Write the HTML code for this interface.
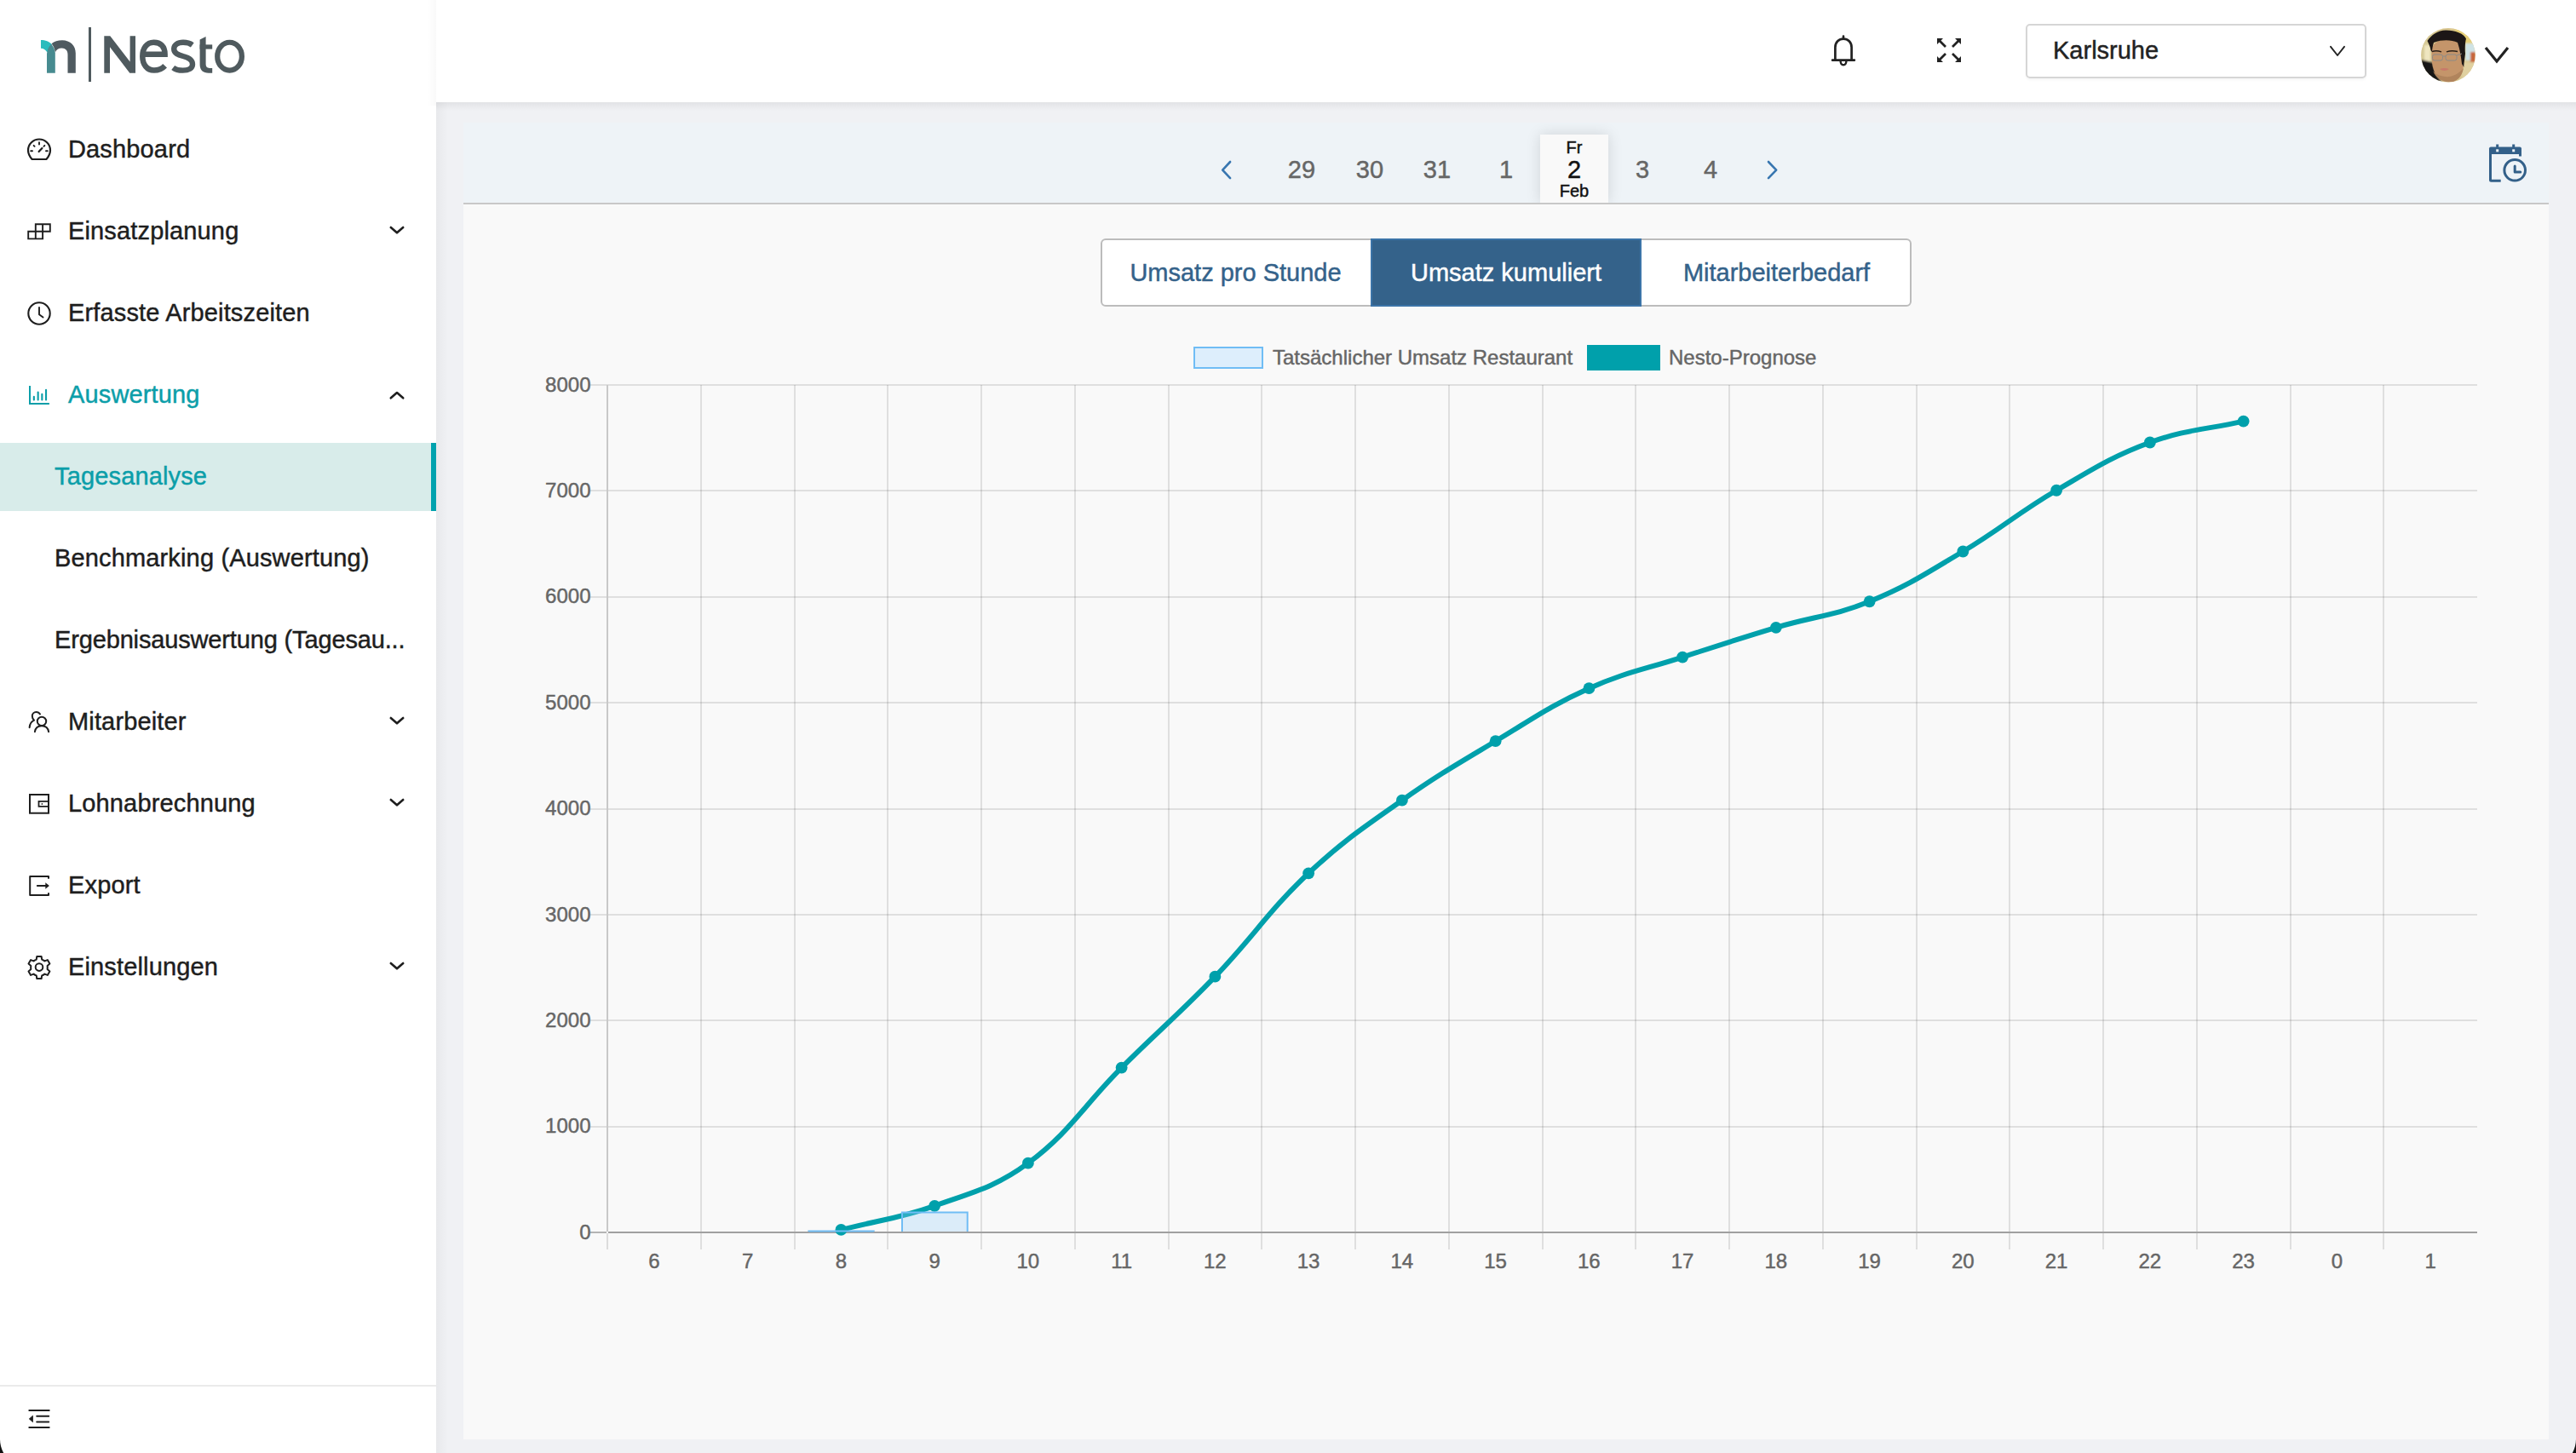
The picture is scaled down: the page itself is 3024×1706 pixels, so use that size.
<!DOCTYPE html>
<html><head><meta charset="utf-8"><title>Nesto Tagesanalyse</title>
<style>
html,body{margin:0;padding:0;}
body{width:3024px;height:1706px;position:relative;overflow:hidden;background:#f0f1f4;font-family:"Liberation Sans",sans-serif;}
.a{position:absolute;}
div{-webkit-text-stroke:0.45px currentColor;}
svg{position:absolute;overflow:visible;}
</style></head><body>

<div class="a" style="left:512px;top:120px;width:14px;height:1586px;background:linear-gradient(to right,rgba(0,0,0,0.035),rgba(0,0,0,0));"></div>
<div class="a" style="left:544px;top:144px;width:2448px;height:94px;background:#eef3f7;"></div>
<div class="a" style="left:544px;top:238px;width:2448px;height:2px;background:#c8c8c8;"></div>
<div class="a" style="left:544px;top:240px;width:2448px;height:1450px;background:#f9f9f9;"></div>
<div class="a" style="left:512px;top:120px;width:2512px;height:10px;background:linear-gradient(to bottom,rgba(0,0,0,0.06),rgba(0,0,0,0));"></div>
<div class="a" style="left:0;top:0;width:3024px;height:120px;background:#fff;"></div>
<div class="a" style="left:0;top:0;width:512px;height:1706px;background:#fff;"></div>
<svg style="left:40px;top:40px" width="60" height="60" viewBox="0 0 60 60">
<path d="M8,7 C13,7 18,8.5 21,12.5 L15.5,21.5 C13.5,18.5 11,16.7 8,16.7 Z" fill="#2bbcbd"/>
<path d="M15,45.7 L15,23 C15.5,18 17.5,14.5 20.2,11.8 C22.5,14.5 24.3,18 24.8,22 L24.8,45.7 Z" fill="#478b90"/>
<path d="M20.6,11.3 C23.5,8.6 28,7.2 33,7.2 C42.5,7.2 48.8,13.5 48.8,22.5 L48.8,45.7 L39.5,45.7 L39.5,24 C39.5,19.3 36.8,16.5 32.6,16.5 C28.8,16.5 26.2,18.5 24.9,21.3 C24.3,17.5 22.8,14 20.6,11.3 Z" fill="#4f5a60"/>
</svg>
<div class="a" style="left:104px;top:32px;width:3px;height:64px;background:#4f5a5e;"></div>
<svg style="left:0;top:0" width="300" height="120" viewBox="0 0 300 120">
<path d="M122.3,85.8 V42.2 H129.3 L152.6,72.5 V42.2 H159 V85.8 H152.3 L129,55.3 V85.8 Z" fill="#4f5a5e"/>
<path d="M167.3,63.7 H193.6 C193.6,54.5 188.5,49.8 180.5,49.8 C172,49.8 167.3,57 167.3,66.2 C167.3,75.5 172.5,82.6 180.8,82.6 C186,82.6 190.5,80.6 193.6,77.2" stroke="#4f5a5e" stroke-width="6.5" fill="none"/>
<path d="M225.8,52.8 C222.8,50.6 219.2,49.8 215,49.8 C208.5,49.8 204.2,52.8 204.2,57.5 C204.2,62.6 209,64.4 215,66 C221.6,67.6 226,70 226,75.5 C226,80 221.6,82.6 214.6,82.6 C210,82.6 206,81.6 203.2,79.4" stroke="#4f5a5e" stroke-width="6.4" fill="none"/>
<path d="M234.6,46.6 L241.6,43 V74.8 C241.6,78.6 243.2,79.9 246,79.9 H249.2 V85.8 H245 C238.2,85.8 234.6,82.4 234.6,75.6 Z" fill="#4f5a5e"/>
<rect x="234.6" y="52.4" width="14.6" height="5.2" fill="#4f5a5e"/>
<ellipse cx="269.55" cy="66.2" rx="14.35" ry="16.45" stroke="#4f5a5e" stroke-width="6.2" fill="none"/>
</svg>
<svg style="left:26px;top:156px" width="40" height="40" viewBox="0 0 40 40"><path d="M11.6,31 L28.4,31 C31.5,27.5 33,24 33,20.5 C33,13 27,7.5 20,7.5 C13,7.5 7,13 7,20.5 C7,24 8.5,27.5 11.6,31 Z" fill="none" stroke="#1e1e1e" stroke-width="2.2" stroke-linejoin="round"/>
 <path d="M20,11.3 L20,13.6 M13.6,14.8 L14.6,15.8 M26.4,14.8 L25.4,15.8 M10.2,21.3 L12,21.3 M29.8,21.3 L28,21.3" stroke="#1e1e1e" stroke-width="1.9" stroke-linecap="round"/>
 <path d="M19.6,22 L23.4,18" stroke="#1e1e1e" stroke-width="2.2" stroke-linecap="round"/></svg>
<div style="position:absolute;left:80px;top:161.45px;font-size:29px;line-height:29px;color:#1e1e1e;white-space:nowrap;letter-spacing:0.15px;">Dashboard</div>
<svg style="left:26px;top:252px" width="40" height="40" viewBox="0 0 40 40"><path d="M7.2,19.8 H24.1 M15.8,11.3 H32.8 M7.2,28.4 H24.1 M7.2,19.8 V28.4 M15.8,11.3 V28.4 M24.1,11.3 V28.4 M32.8,11.3 V19.8 M24.1,19.8 H32.8" fill="none" stroke="#1e1e1e" stroke-width="1.9" stroke-linecap="square"/></svg>
<div style="position:absolute;left:80px;top:257.45px;font-size:29px;line-height:29px;color:#1e1e1e;white-space:nowrap;letter-spacing:0.15px;">Einsatzplanung</div>
<svg style="left:450px;top:260.8px" width="32" height="20" viewBox="0 0 32 20"><path d="M8.8,6 L16,12.3 L23.2,6" fill="none" stroke="#1e1e1e" stroke-width="2.6" stroke-linecap="round" stroke-linejoin="round"/></svg>
<svg style="left:26px;top:348px" width="40" height="40" viewBox="0 0 40 40"><circle cx="20" cy="20" r="12.7" fill="none" stroke="#1e1e1e" stroke-width="2.1"/>
 <path d="M20,13 V21.3 L24.5,24.6" fill="none" stroke="#1e1e1e" stroke-width="1.9" stroke-linecap="round" stroke-linejoin="round"/></svg>
<div style="position:absolute;left:80px;top:353.45px;font-size:29px;line-height:29px;color:#1e1e1e;white-space:nowrap;letter-spacing:0.15px;">Erfasste Arbeitszeiten</div>
<svg style="left:26px;top:444px" width="40" height="40" viewBox="0 0 40 40"><path d="M9,8.9 V29.9 H31.9" fill="none" stroke="#0b9ea9" stroke-width="2"/>
 <path d="M13.85,21.7 V25.4 M18.65,16.5 V25.4 M23.35,18.8 V25.4 M28.05,13.7 V25.4" stroke="#0b9ea9" stroke-width="2.1" stroke-linecap="round"/></svg>
<div style="position:absolute;left:80px;top:449.45px;font-size:29px;line-height:29px;color:#0b9ea9;white-space:nowrap;letter-spacing:0.15px;">Auswertung</div>
<svg style="left:450px;top:455px" width="32" height="20" viewBox="0 0 32 20"><path d="M8.8,12.3 L16,6 L23.2,12.3" fill="none" stroke="#1e1e1e" stroke-width="2.6" stroke-linecap="round" stroke-linejoin="round"/></svg>
<svg style="left:26px;top:828px" width="40" height="40" viewBox="0 0 40 40"><path d="M21,10.5 C20,8.8 18.4,8 16.5,8 C13.8,8 11.8,10 11.8,12.8 C11.8,14.8 12.8,16.6 14.1,17.7 C11,19 9,22 8.6,26.2" fill="none" stroke="#1e1e1e" stroke-width="2" stroke-linecap="round" stroke-linejoin="round"/>
 <circle cx="23" cy="18.9" r="5.2" fill="none" stroke="#1e1e1e" stroke-width="2"/>
 <path d="M14.9,31.2 C15.5,27 18.5,24.2 23,24.2 C27.5,24.2 30.5,27 31.1,31.2" fill="none" stroke="#1e1e1e" stroke-width="2" stroke-linecap="round"/></svg>
<div style="position:absolute;left:80px;top:833.45px;font-size:29px;line-height:29px;color:#1e1e1e;white-space:nowrap;letter-spacing:0.15px;">Mitarbeiter</div>
<svg style="left:450px;top:836.8px" width="32" height="20" viewBox="0 0 32 20"><path d="M8.8,6 L16,12.3 L23.2,6" fill="none" stroke="#1e1e1e" stroke-width="2.6" stroke-linecap="round" stroke-linejoin="round"/></svg>
<svg style="left:26px;top:924px" width="40" height="40" viewBox="0 0 40 40"><rect x="9" y="9" width="22" height="21.7" fill="none" stroke="#1e1e1e" stroke-width="2"/>
 <path d="M31,16.9 H19.5 V22.8 H31" fill="none" stroke="#1e1e1e" stroke-width="1.8"/>
 <circle cx="23.4" cy="19.9" r="0.9" fill="#1e1e1e"/></svg>
<div style="position:absolute;left:80px;top:929.45px;font-size:29px;line-height:29px;color:#1e1e1e;white-space:nowrap;letter-spacing:0.15px;">Lohnabrechnung</div>
<svg style="left:450px;top:932.8px" width="32" height="20" viewBox="0 0 32 20"><path d="M8.8,6 L16,12.3 L23.2,6" fill="none" stroke="#1e1e1e" stroke-width="2.6" stroke-linecap="round" stroke-linejoin="round"/></svg>
<svg style="left:26px;top:1020px" width="40" height="40" viewBox="0 0 40 40"><path d="M31,11 V9 H9.2 V31 H31 V29" fill="none" stroke="#1e1e1e" stroke-width="2" stroke-linecap="round" stroke-linejoin="round"/>
 <path d="M17.8,20 H28" stroke="#1e1e1e" stroke-width="1.9" stroke-linecap="round"/>
 <path d="M27.3,16.3 L31.9,20 L27.3,23.7 Z" fill="#1e1e1e"/></svg>
<div style="position:absolute;left:80px;top:1025.45px;font-size:29px;line-height:29px;color:#1e1e1e;white-space:nowrap;letter-spacing:0.15px;">Export</div>
<svg style="left:26px;top:1116px" width="40" height="40" viewBox="0 0 40 40"><path d="M17.3,7 H22.6 L23.2,10.6 C24.4,11 25.4,11.6 26.4,12.4 L29.8,11.1 L32.4,15.6 L29.6,18 C29.8,19.3 29.8,20.7 29.6,22 L32.4,24.4 L29.8,28.9 L26.4,27.6 C25.4,28.4 24.4,29 23.2,29.4 L22.6,33 H17.3 L16.7,29.4 C15.5,29 14.5,28.4 13.5,27.6 L10.1,28.9 L7.5,24.4 L10.3,22 C10.1,20.7 10.1,19.3 10.3,18 L7.5,15.6 L10.1,11.1 L13.5,12.4 C14.5,11.6 15.5,11 16.7,10.6 Z" fill="none" stroke="#1e1e1e" stroke-width="2" stroke-linejoin="round"/>
 <circle cx="20" cy="19.6" r="4.3" fill="none" stroke="#1e1e1e" stroke-width="2"/></svg>
<div style="position:absolute;left:80px;top:1121.45px;font-size:29px;line-height:29px;color:#1e1e1e;white-space:nowrap;letter-spacing:0.15px;">Einstellungen</div>
<svg style="left:450px;top:1124.8px" width="32" height="20" viewBox="0 0 32 20"><path d="M8.8,6 L16,12.3 L23.2,6" fill="none" stroke="#1e1e1e" stroke-width="2.6" stroke-linecap="round" stroke-linejoin="round"/></svg>
<div class="a" style="left:502px;top:0;width:10px;height:124px;background:linear-gradient(to left,rgba(0,0,0,0.022),rgba(0,0,0,0));"></div>
<div class="a" style="left:0;top:520px;width:506px;height:80px;background:#d8ecea;"></div>
<div class="a" style="left:506px;top:520px;width:6px;height:80px;background:#00a2ae;"></div>
<div style="position:absolute;left:64px;top:545.45px;font-size:29px;line-height:29px;color:#0b9ea9;white-space:nowrap;letter-spacing:0.15px;">Tagesanalyse</div>
<div style="position:absolute;left:64px;top:641.45px;font-size:29px;line-height:29px;color:#1e1e1e;white-space:nowrap;letter-spacing:0.15px;">Benchmarking (Auswertung)</div>
<div style="position:absolute;left:64px;top:737.45px;font-size:29px;line-height:29px;color:#1e1e1e;white-space:nowrap;letter-spacing:-0.15px;">Ergebnisauswertung (Tagesau...</div>
<div class="a" style="left:0;top:1626px;width:512px;height:2px;background:#ebebeb;"></div>
<svg style="left:26px;top:1646px" width="40" height="40" viewBox="0 0 40 40">
<path d="M8.3,9.9 H31.7 M17.2,16.7 H31.2 M17.2,23.4 H31.2 M8.3,29.9 H31.7" stroke="#1e1e1e" stroke-width="2" stroke-linecap="round"/>
<path d="M8.3,19.9 L12.5,16.2 L12.5,23.7 Z" fill="#1e1e1e" stroke="#1e1e1e" stroke-width="0.8" stroke-linejoin="round"/>
</svg>
<svg style="left:2144px;top:36px" width="40" height="46" viewBox="0 0 40 46">
<path d="M20,6.6 V9.6" stroke="#222" stroke-width="2.6" stroke-linecap="round"/>
<path d="M10.4,34.7 V19.5 C10.4,13.5 14.8,9.6 20,9.6 C25.2,9.6 29.6,13.5 29.6,19.5 V34.7" fill="none" stroke="#222" stroke-width="2.7"/>
<path d="M7.2,34.7 H32.8" stroke="#222" stroke-width="2.8" stroke-linecap="round"/>
<path d="M16.6,36 C16.8,38.8 18.2,40.2 20,40.2 C21.8,40.2 23.2,38.8 23.4,36" fill="none" stroke="#222" stroke-width="2.4"/>
</svg>
<svg style="left:2270px;top:41px" width="36" height="36" viewBox="0 0 36 36">
<path d="M14,14 L7,7 M22,14 L29,7 M14,22 L7,29 M22,22 L29,29" stroke="#222" stroke-width="2.8"/>
<path d="M4,4 H11 L4,11 Z M32,4 H25 L32,11 Z M4,32 H11 L4,25 Z M32,32 H25 L32,25 Z" fill="#222"/>
</svg>
<div class="a" style="left:2378px;top:28px;width:396px;height:60px;border:2px solid #d6d6d6;border-radius:5px;background:#fff;box-shadow:0 2px 3px rgba(0,0,0,0.04);"></div>
<div style="position:absolute;left:2410px;top:45.45px;font-size:29px;line-height:29px;color:#222;white-space:nowrap;">Karlsruhe</div>
<svg style="left:2730px;top:48px" width="30" height="24" viewBox="0 0 30 24"><path d="M6,6.8 L14,17 L22,6.8" fill="none" stroke="#222" stroke-width="1.9" stroke-linecap="round" stroke-linejoin="round"/></svg>
<svg style="left:2842px;top:33px" width="64" height="64" viewBox="0 0 64 64">
<defs>
<clipPath id="avc"><circle cx="32" cy="31.8" r="31.8"/></clipPath>
<filter id="avb" x="-10%" y="-10%" width="120%" height="120%"><feGaussianBlur stdDeviation="0.9"/></filter>
<filter id="avb2" x="-10%" y="-10%" width="120%" height="120%"><feGaussianBlur stdDeviation="0.5"/></filter>
</defs>
<g clip-path="url(#avc)">
<rect width="64" height="64" fill="#d8c58e"/>
<g filter="url(#avb)">
<rect x="0" y="0" width="14" height="64" fill="#d6c995"/>
<rect x="4" y="20" width="7" height="30" fill="#efe6c0"/>
<rect x="40" y="0" width="24" height="18" fill="#e6cf78"/>
<rect x="52" y="18" width="12" height="20" fill="#cfe3e6"/>
<rect x="58" y="28" width="6" height="12" fill="#c8663a"/>
<rect x="48" y="40" width="16" height="24" fill="#e0d0a0"/>
<path d="M0,37 L13.5,40 L19,56 L24,64 L0,64 Z" fill="#121212"/>
</g>
<g filter="url(#avb2)">
<path d="M12.5,27 C12,40 14,52 20,58 C24,62 30,64 37,63 C44,61 49,54 50,44 L50.5,26 C49,18 45,14 32,13 C20,13 13,18 12.5,27 Z" fill="#c4956a"/>
<path d="M14,50 C18,60 26,64 36,63 C44,62 48,56 50,47 C44,54 36,58 28,57 C22,56 17,54 14,50 Z" fill="#b0845c"/>
<path d="M7.5,15 C12,8 20,2.5 29,2.4 C40,2.3 50,6 53,12.4 C52,16 51.5,22 52,30 C51,38 50,44 50.5,46 L48,42 C47,34 46,26 43,17 C36,14 26,13 15,17 C14,20 13.3,24 12.8,28 L11.5,26 C11,22 9,18 7.5,15 Z" fill="#1f1812"/>
<path d="M13,27.5 C16,26.5 20,26.5 24,27.8 M30,27.8 C34,26.5 39,26.5 43,27.5" stroke="#2a2018" stroke-width="1.4" fill="none"/>
<rect x="13.5" y="31" width="12" height="7" rx="2.5" fill="none" stroke="#8a8a88" stroke-width="1"/>
<rect x="29" y="31" width="13" height="7" rx="2.5" fill="none" stroke="#8a8a88" stroke-width="1"/>
<path d="M25.5,33 H29 M42,32 L48,30" stroke="#8a8a88" stroke-width="1"/>
<path d="M22,48 C25,46.5 30,46.5 33,48 C30,50.5 25,50.5 22,48 Z" fill="#c87a6a"/>
<path d="M22,62 L28,64 L20,64 Z" fill="#9aa8b8"/>
</g>
</g></svg>
<svg style="left:2910px;top:48px" width="40" height="32" viewBox="0 0 40 32"><path d="M8,8 L21,24 L34,8" fill="none" stroke="#222" stroke-width="3.2" stroke-linejoin="miter"/></svg>
<div class="a" style="left:1760px;top:144px;width:176px;height:94px;overflow:hidden;"><div class="a" style="left:48px;top:14px;width:80px;height:80px;background:#f9f9f9;box-shadow:0 0 16px rgba(0,0,0,0.13);"></div></div>
<svg style="left:1428px;top:184px" width="24" height="32" viewBox="0 0 24 32"><path d="M16.1,6 L7.2,15.6 L16.1,25.1" fill="none" stroke="#3876b0" stroke-width="2.6" stroke-linecap="round" stroke-linejoin="round"/></svg>
<svg style="left:2069px;top:184px" width="24" height="32" viewBox="0 0 24 32"><path d="M7,6 L16.2,15.6 L7,25.1" fill="none" stroke="#3876b0" stroke-width="2.6" stroke-linecap="round" stroke-linejoin="round"/></svg>
<div style="position:absolute;left:1488.00px;top:184.75px;width:80px;text-align:center;font-size:29px;line-height:29px;color:#666;white-space:nowrap;">29</div>
<div style="position:absolute;left:1568.00px;top:184.75px;width:80px;text-align:center;font-size:29px;line-height:29px;color:#666;white-space:nowrap;">30</div>
<div style="position:absolute;left:1647.00px;top:184.75px;width:80px;text-align:center;font-size:29px;line-height:29px;color:#666;white-space:nowrap;">31</div>
<div style="position:absolute;left:1728.00px;top:184.75px;width:80px;text-align:center;font-size:29px;line-height:29px;color:#666;white-space:nowrap;">1</div>
<div style="position:absolute;left:1888.00px;top:184.75px;width:80px;text-align:center;font-size:29px;line-height:29px;color:#666;white-space:nowrap;">3</div>
<div style="position:absolute;left:1968.00px;top:184.75px;width:80px;text-align:center;font-size:29px;line-height:29px;color:#666;white-space:nowrap;">4</div>
<div style="position:absolute;left:1808.00px;top:163.07px;width:80px;text-align:center;font-size:20px;line-height:20px;color:#111;white-space:nowrap;">Fr</div>
<div style="position:absolute;left:1808.00px;top:184.75px;width:80px;text-align:center;font-size:29px;line-height:29px;color:#111;white-space:nowrap;">2</div>
<div style="position:absolute;left:1808.00px;top:214.07px;width:80px;text-align:center;font-size:20px;line-height:20px;color:#111;white-space:nowrap;">Feb</div>
<svg style="left:2918px;top:166px" width="52" height="52" viewBox="0 0 52 52">
<path d="M13.7,3.5 V7 M32.7,3.5 V7" stroke="#336089" stroke-width="3"/>
<path d="M4,8.5 Q4,6.5 6,6.5 H40 Q42,6.5 42,8.5 V15 H4 Z" fill="#336089"/>
<rect x="12.2" y="9.3" width="3" height="3" fill="#eef3f7"/>
<rect x="31.2" y="9.3" width="3" height="3" fill="#eef3f7"/>
<path d="M5.5,14 V45.3 Q5.5,46.3 6.5,46.3 H17.7" fill="none" stroke="#336089" stroke-width="3"/>
<path d="M40.5,14 V17.5" stroke="#336089" stroke-width="3"/>
<circle cx="34.2" cy="33.8" r="12.3" fill="none" stroke="#336089" stroke-width="3"/>
<path d="M34.2,28.9 V36 H40.8" fill="none" stroke="#336089" stroke-width="3" stroke-linecap="round" stroke-linejoin="round"/>
</svg>
<div class="a" style="left:1292px;top:280px;width:948px;height:76px;border:2px solid #bcbcbc;border-radius:6px;background:#fff;"></div>
<div class="a" style="left:1609px;top:280px;width:318px;height:80px;background:#34628a;box-shadow:inset 0 0 0 2px #3c74a8;"></div>
<div style="position:absolute;left:1292.00px;top:306.45px;width:317px;text-align:center;font-size:29px;line-height:29px;color:#34628a;white-space:nowrap;">Umsatz pro Stunde</div>
<div style="position:absolute;left:1609.00px;top:306.45px;width:318px;text-align:center;font-size:29px;line-height:29px;color:#ffffff;white-space:nowrap;">Umsatz kumuliert</div>
<div style="position:absolute;left:1927.00px;top:306.45px;width:317px;text-align:center;font-size:29px;line-height:29px;color:#34628a;white-space:nowrap;">Mitarbeiterbedarf</div>
<div class="a" style="left:1401px;top:407px;width:78px;height:22px;border:2px solid #70bdf5;background:#ddeefc;"></div>
<div style="position:absolute;left:1494px;top:408.08px;font-size:24px;line-height:24px;color:#666;white-space:nowrap;">Tatsächlicher Umsatz Restaurant</div>
<div class="a" style="left:1863px;top:405px;width:86px;height:30px;background:#00a0ab;"></div>
<div style="position:absolute;left:1959px;top:408.08px;font-size:24px;line-height:24px;color:#666;white-space:nowrap;">Nesto-Prognose</div>
<svg style="left:0;top:0" width="3024" height="1706" viewBox="0 0 3024 1706">
<line x1="693" y1="1323" x2="2908" y2="1323" stroke="rgba(0,0,0,0.1)" stroke-width="2"/>
<line x1="693" y1="1198" x2="2908" y2="1198" stroke="rgba(0,0,0,0.1)" stroke-width="2"/>
<line x1="693" y1="1074" x2="2908" y2="1074" stroke="rgba(0,0,0,0.1)" stroke-width="2"/>
<line x1="693" y1="950" x2="2908" y2="950" stroke="rgba(0,0,0,0.1)" stroke-width="2"/>
<line x1="693" y1="825" x2="2908" y2="825" stroke="rgba(0,0,0,0.1)" stroke-width="2"/>
<line x1="693" y1="701" x2="2908" y2="701" stroke="rgba(0,0,0,0.1)" stroke-width="2"/>
<line x1="693" y1="576" x2="2908" y2="576" stroke="rgba(0,0,0,0.1)" stroke-width="2"/>
<line x1="693" y1="452" x2="2908" y2="452" stroke="rgba(0,0,0,0.1)" stroke-width="2"/>
<line x1="823" y1="452" x2="823" y2="1467" stroke="rgba(0,0,0,0.1)" stroke-width="2"/>
<line x1="933" y1="452" x2="933" y2="1467" stroke="rgba(0,0,0,0.1)" stroke-width="2"/>
<line x1="1042" y1="452" x2="1042" y2="1467" stroke="rgba(0,0,0,0.1)" stroke-width="2"/>
<line x1="1152" y1="452" x2="1152" y2="1467" stroke="rgba(0,0,0,0.1)" stroke-width="2"/>
<line x1="1262" y1="452" x2="1262" y2="1467" stroke="rgba(0,0,0,0.1)" stroke-width="2"/>
<line x1="1372" y1="452" x2="1372" y2="1467" stroke="rgba(0,0,0,0.1)" stroke-width="2"/>
<line x1="1481" y1="452" x2="1481" y2="1467" stroke="rgba(0,0,0,0.1)" stroke-width="2"/>
<line x1="1591" y1="452" x2="1591" y2="1467" stroke="rgba(0,0,0,0.1)" stroke-width="2"/>
<line x1="1701" y1="452" x2="1701" y2="1467" stroke="rgba(0,0,0,0.1)" stroke-width="2"/>
<line x1="1811" y1="452" x2="1811" y2="1467" stroke="rgba(0,0,0,0.1)" stroke-width="2"/>
<line x1="1920" y1="452" x2="1920" y2="1467" stroke="rgba(0,0,0,0.1)" stroke-width="2"/>
<line x1="2030" y1="452" x2="2030" y2="1467" stroke="rgba(0,0,0,0.1)" stroke-width="2"/>
<line x1="2140" y1="452" x2="2140" y2="1467" stroke="rgba(0,0,0,0.1)" stroke-width="2"/>
<line x1="2250" y1="452" x2="2250" y2="1467" stroke="rgba(0,0,0,0.1)" stroke-width="2"/>
<line x1="2359" y1="452" x2="2359" y2="1467" stroke="rgba(0,0,0,0.1)" stroke-width="2"/>
<line x1="2469" y1="452" x2="2469" y2="1467" stroke="rgba(0,0,0,0.1)" stroke-width="2"/>
<line x1="2579" y1="452" x2="2579" y2="1467" stroke="rgba(0,0,0,0.1)" stroke-width="2"/>
<line x1="2689" y1="452" x2="2689" y2="1467" stroke="rgba(0,0,0,0.1)" stroke-width="2"/>
<line x1="2798" y1="452" x2="2798" y2="1467" stroke="rgba(0,0,0,0.1)" stroke-width="2"/>
<line x1="713" y1="452" x2="713" y2="1446" stroke="#c8c8c8" stroke-width="2"/>
<line x1="713" y1="1448" x2="713" y2="1467" stroke="#dcdcdc" stroke-width="2"/>
<line x1="693" y1="1447" x2="712" y2="1447" stroke="#b4b4b4" stroke-width="2"/>
<line x1="714" y1="1447" x2="2908" y2="1447" stroke="#a0a0a0" stroke-width="2"/>
<path d="M987.38,1443.90 C1031.28,1432.66 1054.61,1430.95 1097.12,1415.80 C1142.41,1399.67 1168.71,1393.90 1206.88,1365.70 C1256.51,1329.02 1272.21,1297.92 1316.62,1253.60 C1360.01,1210.32 1383.92,1190.85 1426.38,1146.70 C1471.72,1099.53 1488.68,1070.05 1536.12,1025.30 C1576.48,987.25 1600.46,971.79 1645.88,939.70 C1688.26,909.75 1711.06,896.90 1755.62,870.20 C1798.86,844.30 1819.59,828.77 1865.38,808.20 C1907.39,789.33 1931.12,785.91 1975.12,771.60 C2018.92,757.35 2040.74,749.94 2084.88,736.80 C2128.54,723.80 2152.67,723.32 2194.62,706.25 C2240.47,687.60 2261.61,672.92 2304.38,647.50 C2349.41,620.72 2368.88,602.13 2414.12,575.75 C2456.68,550.93 2477.97,536.47 2523.88,519.50 C2565.77,504.01 2589.72,504.56 2633.62,494.60" fill="none" stroke="#00a0ab" stroke-width="6" stroke-linejoin="round"/>
<circle cx="987.38" cy="1443.90" r="6.9" fill="#00a0ab"/>
<circle cx="1097.12" cy="1415.80" r="6.9" fill="#00a0ab"/>
<circle cx="1206.88" cy="1365.70" r="6.9" fill="#00a0ab"/>
<circle cx="1316.62" cy="1253.60" r="6.9" fill="#00a0ab"/>
<circle cx="1426.38" cy="1146.70" r="6.9" fill="#00a0ab"/>
<circle cx="1536.12" cy="1025.30" r="6.9" fill="#00a0ab"/>
<circle cx="1645.88" cy="939.70" r="6.9" fill="#00a0ab"/>
<circle cx="1755.62" cy="870.20" r="6.9" fill="#00a0ab"/>
<circle cx="1865.38" cy="808.20" r="6.9" fill="#00a0ab"/>
<circle cx="1975.12" cy="771.60" r="6.9" fill="#00a0ab"/>
<circle cx="2084.88" cy="736.80" r="6.9" fill="#00a0ab"/>
<circle cx="2194.62" cy="706.25" r="6.9" fill="#00a0ab"/>
<circle cx="2304.38" cy="647.50" r="6.9" fill="#00a0ab"/>
<circle cx="2414.12" cy="575.75" r="6.9" fill="#00a0ab"/>
<circle cx="2523.88" cy="519.50" r="6.9" fill="#00a0ab"/>
<circle cx="2633.62" cy="494.60" r="6.9" fill="#00a0ab"/>
<path d="M949.4,1446 V1445.4 H1025.7 V1446" fill="none" stroke="#70bdf5" stroke-width="2"/>
<rect x="1059" y="1423.6" width="76.7" height="22.4" fill="rgba(150,205,250,0.3)"/>
<path d="M1059,1446 V1423.6 H1135.7 V1446" fill="none" stroke="#70bdf5" stroke-width="2"/>
</svg>
<div style="position:absolute;left:573.50px;top:1434.73px;width:120px;text-align:right;font-size:24px;line-height:24px;color:#666;white-space:nowrap;">0</div>
<div style="position:absolute;left:573.50px;top:1310.35px;width:120px;text-align:right;font-size:24px;line-height:24px;color:#666;white-space:nowrap;">1000</div>
<div style="position:absolute;left:573.50px;top:1185.98px;width:120px;text-align:right;font-size:24px;line-height:24px;color:#666;white-space:nowrap;">2000</div>
<div style="position:absolute;left:573.50px;top:1061.60px;width:120px;text-align:right;font-size:24px;line-height:24px;color:#666;white-space:nowrap;">3000</div>
<div style="position:absolute;left:573.50px;top:937.23px;width:120px;text-align:right;font-size:24px;line-height:24px;color:#666;white-space:nowrap;">4000</div>
<div style="position:absolute;left:573.50px;top:812.85px;width:120px;text-align:right;font-size:24px;line-height:24px;color:#666;white-space:nowrap;">5000</div>
<div style="position:absolute;left:573.50px;top:688.48px;width:120px;text-align:right;font-size:24px;line-height:24px;color:#666;white-space:nowrap;">6000</div>
<div style="position:absolute;left:573.50px;top:564.10px;width:120px;text-align:right;font-size:24px;line-height:24px;color:#666;white-space:nowrap;">7000</div>
<div style="position:absolute;left:573.50px;top:439.73px;width:120px;text-align:right;font-size:24px;line-height:24px;color:#666;white-space:nowrap;">8000</div>
<div style="position:absolute;left:727.88px;top:1468.68px;width:80px;text-align:center;font-size:24px;line-height:24px;color:#666;white-space:nowrap;">6</div>
<div style="position:absolute;left:837.62px;top:1468.68px;width:80px;text-align:center;font-size:24px;line-height:24px;color:#666;white-space:nowrap;">7</div>
<div style="position:absolute;left:947.38px;top:1468.68px;width:80px;text-align:center;font-size:24px;line-height:24px;color:#666;white-space:nowrap;">8</div>
<div style="position:absolute;left:1057.12px;top:1468.68px;width:80px;text-align:center;font-size:24px;line-height:24px;color:#666;white-space:nowrap;">9</div>
<div style="position:absolute;left:1166.88px;top:1468.68px;width:80px;text-align:center;font-size:24px;line-height:24px;color:#666;white-space:nowrap;">10</div>
<div style="position:absolute;left:1276.62px;top:1468.68px;width:80px;text-align:center;font-size:24px;line-height:24px;color:#666;white-space:nowrap;">11</div>
<div style="position:absolute;left:1386.38px;top:1468.68px;width:80px;text-align:center;font-size:24px;line-height:24px;color:#666;white-space:nowrap;">12</div>
<div style="position:absolute;left:1496.12px;top:1468.68px;width:80px;text-align:center;font-size:24px;line-height:24px;color:#666;white-space:nowrap;">13</div>
<div style="position:absolute;left:1605.88px;top:1468.68px;width:80px;text-align:center;font-size:24px;line-height:24px;color:#666;white-space:nowrap;">14</div>
<div style="position:absolute;left:1715.62px;top:1468.68px;width:80px;text-align:center;font-size:24px;line-height:24px;color:#666;white-space:nowrap;">15</div>
<div style="position:absolute;left:1825.38px;top:1468.68px;width:80px;text-align:center;font-size:24px;line-height:24px;color:#666;white-space:nowrap;">16</div>
<div style="position:absolute;left:1935.12px;top:1468.68px;width:80px;text-align:center;font-size:24px;line-height:24px;color:#666;white-space:nowrap;">17</div>
<div style="position:absolute;left:2044.88px;top:1468.68px;width:80px;text-align:center;font-size:24px;line-height:24px;color:#666;white-space:nowrap;">18</div>
<div style="position:absolute;left:2154.62px;top:1468.68px;width:80px;text-align:center;font-size:24px;line-height:24px;color:#666;white-space:nowrap;">19</div>
<div style="position:absolute;left:2264.38px;top:1468.68px;width:80px;text-align:center;font-size:24px;line-height:24px;color:#666;white-space:nowrap;">20</div>
<div style="position:absolute;left:2374.12px;top:1468.68px;width:80px;text-align:center;font-size:24px;line-height:24px;color:#666;white-space:nowrap;">21</div>
<div style="position:absolute;left:2483.88px;top:1468.68px;width:80px;text-align:center;font-size:24px;line-height:24px;color:#666;white-space:nowrap;">22</div>
<div style="position:absolute;left:2593.62px;top:1468.68px;width:80px;text-align:center;font-size:24px;line-height:24px;color:#666;white-space:nowrap;">23</div>
<div style="position:absolute;left:2703.38px;top:1468.68px;width:80px;text-align:center;font-size:24px;line-height:24px;color:#666;white-space:nowrap;">0</div>
<div style="position:absolute;left:2813.12px;top:1468.68px;width:80px;text-align:center;font-size:24px;line-height:24px;color:#666;white-space:nowrap;">1</div>
<svg style="left:0;top:1680px" width="3024" height="26" viewBox="0 1680 3024 26"><path d="M0,1690 A34,34 0 0 0 4.2,1706 L0,1706 Z" fill="#111"/><path d="M3024,1690 A34,34 0 0 1 3019.8,1706 L3024,1706 Z" fill="#111"/></svg>
</body></html>
